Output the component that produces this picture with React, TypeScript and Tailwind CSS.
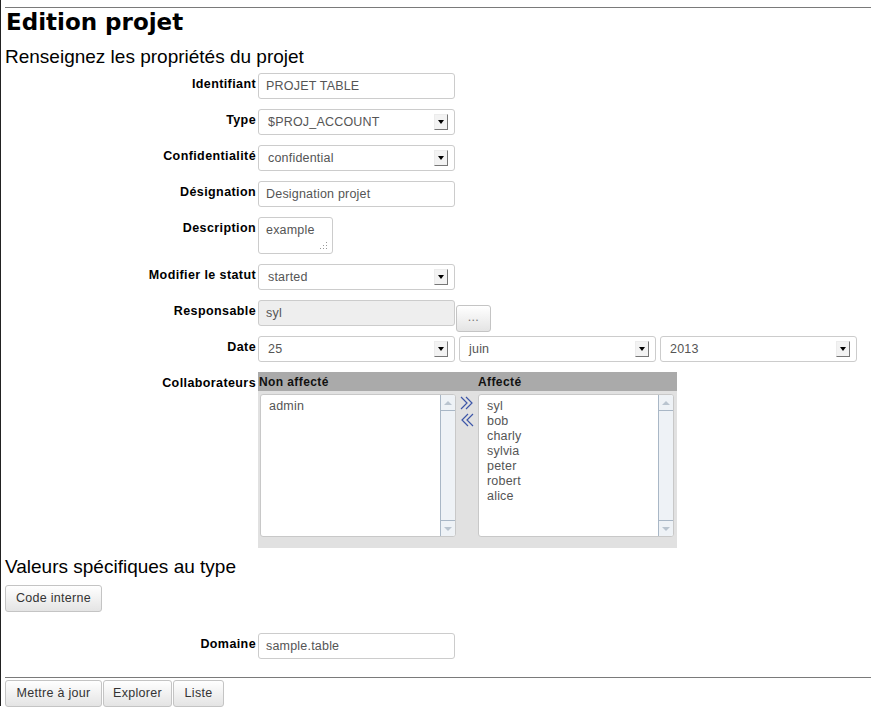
import React from "react";

const Arrow = () => (
    <span className="flex h-[16px] w-[14px] items-center justify-center border border-t-[#ececec] border-l-[#ececec] border-r-[#777] border-b-[#777] bg-[#f3f3f3]">
        <span className="h-0 w-0 border-x-[3px] border-t-[4px] border-x-transparent border-t-black" />
    </span>
);

const Select = ({ value }: { value: string }) => (
    <div className="flex h-[26px] w-[197px] items-center justify-between rounded-[3px] border border-[#ccc] bg-white pl-[9px] pr-[6px] text-[12.5px] tracking-[0.2px] text-[#555]">
        <span>{value}</span>
        <Arrow />
    </div>
);

const Input = ({ value, disabled }: { value: string; disabled?: boolean }) => (
    <div className={disabled
        ? "flex h-[26px] w-[197px] items-center rounded-[3px] border border-[#ccc] bg-[#eee] pl-[7px] text-[12.5px] tracking-[0.2px] text-[#555]"
        : "flex h-[26px] w-[197px] items-center rounded-[3px] border border-[#ccc] bg-white pl-[7px] text-[12.5px] tracking-[0.2px] text-[#555]"}>
        {value}
    </div>
);

const Row = ({ label, children, className }: { label: string; children: React.ReactNode; className?: string }) => (
    <div className={"flex items-start " + (className ?? "")}>
        <div className="w-[251px] whitespace-nowrap pt-[4px] text-right text-[12.5px] font-bold leading-[15px] tracking-[0.4px] text-black">
            {label}
        </div>
        <div className="ml-[2px] flex gap-[4px]">{children}</div>
    </div>
);

const Button = ({ label, className }: { label: string; className?: string }) => (
    <button className={"flex h-[27px] items-center justify-center rounded-[3px] border border-[#c4c4c4] bg-gradient-to-b from-white to-[#e4e4e4] text-[12.5px] tracking-[0.3px] text-[#333] " + (className ?? "")}>
        {label}
    </button>
);

const ScrollBar = () => (
    <div className="flex w-[15px] flex-col border-l border-[#a9b7c6] bg-[#eef2f6]">
        <div className="flex h-[16px] items-center justify-center border-b border-[#a9b7c6]">
            <span className="h-0 w-0 border-x-[4px] border-b-[4px] border-x-transparent border-b-[#b9c4cf]" />
        </div>
        <div className="flex-1" />
        <div className="flex h-[16px] items-center justify-center border-t border-[#a9b7c6]">
            <span className="h-0 w-0 border-x-[4px] border-t-[4px] border-x-transparent border-t-[#b9c4cf]" />
        </div>
    </div>
);

const ListBox = ({ items }: { items: string[] }) => (
    <div className="flex h-[143px] w-[196px] overflow-hidden rounded-[3px] border border-[#c8c8c8] bg-white">
        <div className="flex-1 pl-[8px] pt-[4px] text-[12.5px] leading-[15px] tracking-[0.2px] text-[#555]">
            {items.map((it) => (
                <div key={it}>{it}</div>
            ))}
        </div>
        <ScrollBar />
    </div>
);

const Chevrons = ({ flip }: { flip?: boolean }) => (
    <svg width="14" height="14" viewBox="0 0 14 14" className={flip ? "-scale-x-100" : ""}>
        <polyline points="1,1 7,7 1,13" fill="none" stroke="#3d56a8" strokeWidth="1.2" />
        <polyline points="6,1 12,7 6,13" fill="none" stroke="#3d56a8" strokeWidth="1.2" />
    </svg>
);

const Grip = () => (
    <svg width="9" height="9" viewBox="0 0 9 9" className="absolute bottom-[3px] right-[4px]">
        <rect x="7" y="1" width="1" height="1" fill="#999" />
        <rect x="7" y="4" width="1" height="1" fill="#999" />
        <rect x="7" y="7" width="1" height="1" fill="#999" />
        <rect x="4" y="4" width="1" height="1" fill="#999" />
        <rect x="4" y="7" width="1" height="1" fill="#999" />
        <rect x="1" y="7" width="1" height="1" fill="#999" />
    </svg>
);

export default function App() {
    return (
        <div className="h-[716px] w-[871px] overflow-hidden bg-white font-['Liberation_Sans',Arial,sans-serif] text-black">
            <div className="h-[706px] border-l border-[#222] pl-[4px] pt-[7px]">
                <div className="h-px bg-[#7a7a7a]" />
                <h1 className="pl-[1px] pt-[1px] font-['DejaVu_Sans',sans-serif] text-[23px] font-bold leading-[27px]">Edition projet</h1>
                <h2 className="mt-[10px] text-[19px] leading-[22px]">Renseignez les propriétés du projet</h2>

                <div className="mt-[5px] flex flex-col gap-[10px]">
                    <Row label="Identifiant"><Input value="PROJET TABLE" /></Row>
                    <Row label="Type"><Select value="$PROJ_ACCOUNT" /></Row>
                    <Row label="Confidentialité"><Select value="confidential" /></Row>
                    <Row label="Désignation"><Input value="Designation projet" /></Row>
                    <Row label="Description">
                        <div className="relative h-[37px] w-[75px] rounded-[3px] border border-[#ccc] bg-white pl-[7px] pt-[5px] text-[12.5px] leading-[15px] tracking-[0.2px] text-[#555]">
                            example
                            <Grip />
                        </div>
                    </Row>
                    <Row label="Modifier le statut"><Select value="started" /></Row>
                    <Row label="Responsable" className="h-[26px]">
                        <Input value="syl" disabled />
                        <Button label="..." className="-ml-[3px] mt-[5px] h-[26px] w-[35px] items-end pb-[4px] text-[10px] text-[#777]" />
                    </Row>
                    <Row label="Date">
                        <Select value="25" />
                        <Select value="juin" />
                        <Select value="2013" />
                    </Row>
                    <Row label="Collaborateurs">
                        <div className="flex h-[176px] w-[419px] flex-col bg-[#e1e1e1]">
                            <div className="flex h-[19px] items-center bg-[#aaa] text-[12px] font-bold tracking-[0.4px] text-[#111]">
                                <span className="w-[220px] pl-[1px]">Non affecté</span>
                                <span>Affecté</span>
                            </div>
                            <div className="flex pl-[2px] pt-[3px]">
                                <ListBox items={["admin"]} />
                                <div className="flex w-[22px] flex-col items-center gap-[3px] pt-[2px]">
                                    <Chevrons />
                                    <Chevrons flip />
                                </div>
                                <ListBox items={["syl", "bob", "charly", "sylvia", "peter", "robert", "alice"]} />
                            </div>
                        </div>
                    </Row>
                </div>

                <h2 className="mt-[8px] text-[19px] leading-[22px]">Valeurs spécifiques au type</h2>
                <Button label="Code interne" className="mt-[7px] w-[97px]" />

                <Row label="Domaine" className="mt-[21px]"><Input value="sample.table" /></Row>

                <div className="mt-[18px] h-px bg-[#7a7a7a]" />
                <div className="mt-[2px] flex gap-[1px]">
                    <Button label="Mettre à jour" className="w-[97px]" />
                    <Button label="Explorer" className="w-[69px]" />
                    <Button label="Liste" className="w-[51px]" />
                </div>
            </div>
        </div>
    );
}
